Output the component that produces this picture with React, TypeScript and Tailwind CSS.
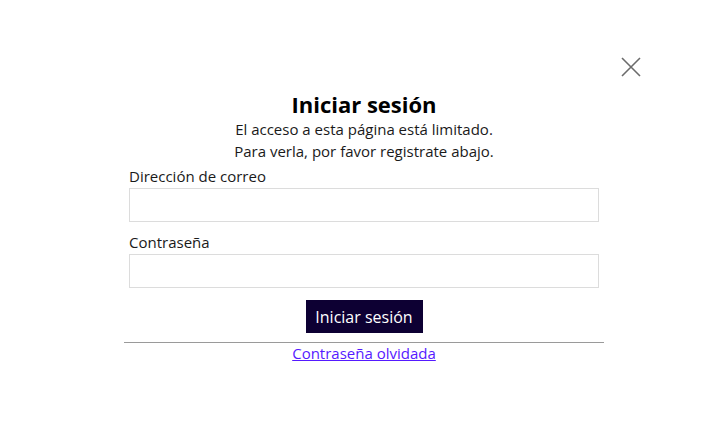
import React from 'react';

function CloseIcon() {
    return (
        <svg width="20" height="20" viewBox="0 0 20 20" fill="none" stroke="#6b6b6b" strokeWidth="1.6">
            <path d="M1 1L19 19M19 1L1 19" />
        </svg>
    );
}

function Field({ label, type }: { label: string; type: string }) {
    return (
        <div className="flex flex-col">
            <label className="text-[15px] leading-[20px] text-[#1a1a1a]">{label}</label>
            <input
                type={type}
                className="mt-[2px] h-[34px] w-full border border-[#dcdcdc] bg-white px-2 outline-none"
            />
        </div>
    );
}

export default function App() {
    return (
        <div className="relative min-h-[421px] w-full bg-white" style={{ fontFamily: '"Open Sans", sans-serif' }}>
            <button className="absolute left-[621px] top-[57px]" aria-label="Cerrar">
                <CloseIcon />
            </button>
            <div className="mx-auto flex w-[480px] flex-col pt-[90px]">
                <h2 className="text-center text-[22px] font-bold leading-[28px] text-black">Iniciar sesión</h2>
                <p className="text-center text-[15px] leading-[22px] text-[#1a1a1a]">
                    El acceso a esta página está limitado.
                    <br />
                    Para verla, por favor registrate abajo.
                </p>
                <div className="mt-[4px] flex flex-col gap-[10px] px-[5px]">
                    <Field label="Dirección de correo" type="email" />
                    <Field label="Contraseña" type="password" />
                </div>
                <div className="mt-[12px] flex justify-center">
                    <button className="h-[33px] w-[117px] bg-[#0d0033] text-[16px] text-white">Iniciar sesión</button>
                </div>
                <hr className="mt-[9px] border-t border-[#9a9a9a]" />
                <div className="text-center leading-[20px]">
                    <a href="#" className="text-[15px] leading-[20px] text-[#551aff] underline">
                        Contraseña olvidada
                    </a>
                </div>
            </div>
        </div>
    );
}
